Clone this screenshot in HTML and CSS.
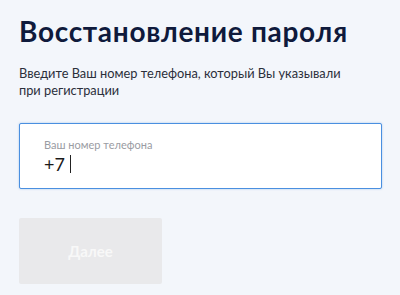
FILE: index.html
```html
<!DOCTYPE html>
<html lang="ru">
<head>
<meta charset="utf-8">
<link rel="stylesheet" href="styles.css">
</head>
<body>
<main class="page">
  <h1 class="title">Восстановление пароля</h1>
  <p class="lead">Введите Ваш номер телефона, который Вы указывали при регистрации</p>
  <div class="field">
    <span class="field-label">Ваш номер телефона</span>
    <span class="field-value">+7 <span class="caret"></span></span>
  </div>
  <button class="btn" disabled>Далее</button>
</main>
</body>
</html>
```
FILE: styles.css
```css
html, body {
  margin: 0;
  padding: 0;
  background: #f3f6fb;
}
.page {
  width: 400px;
  height: 295px;
  box-sizing: border-box;
  padding: 14px 18px 0 19px;
  font-family: "Lato", "Noto Sans", sans-serif;
  display: flex;
  flex-direction: column;
  align-items: flex-start;
}
.title {
  margin: 0;
  font-size: 28px;
  line-height: 34px;
  font-weight: 700;
  color: #0f1a3c;
  letter-spacing: 0.7px;
}
.lead {
  margin: 17px 0 0;
  font-size: 12.8px;
  line-height: 17px;
  color: #2b2f3a;
  width: 345px;
}
.field {
  margin-top: 24px;
  width: 363px;
  height: 66px;
  box-sizing: border-box;
  background: #fff;
  border: 1px solid #4a8fe0;
  border-radius: 2px;
  box-shadow: 0 0 2px rgba(74, 143, 224, 0.5);
  padding: 14px 24px 0;
  display: flex;
  flex-direction: column;
}
.field-label {
  font-size: 11px;
  line-height: 14px;
  color: #9a9ca3;
}
.field-value {
  margin-top: 1px;
  font-size: 18px;
  line-height: 22px;
  color: #1a1a1a;
  display: flex;
  align-items: center;
}
.caret {
  display: inline-block;
  width: 1px;
  height: 18px;
  background: #222;
  margin-left: 5px;
}
.btn {
  margin-top: 29px;
  width: 143px;
  height: 66px;
  border: 0;
  border-radius: 2px;
  background: #e9e9eb;
  color: #f8f8f8;
  font-family: "Lato", "Noto Sans", sans-serif;
  font-size: 15px;
  font-weight: 700;
}
```
